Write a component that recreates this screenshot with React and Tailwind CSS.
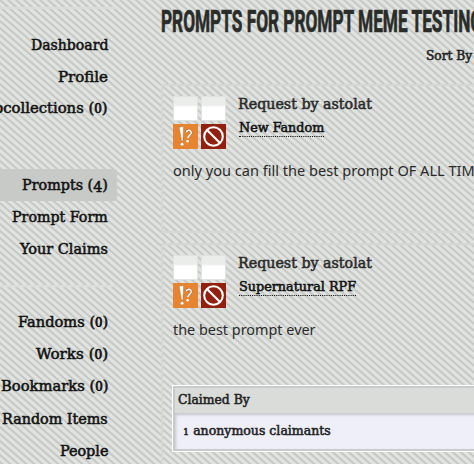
import React, { useLayoutEffect, useRef, useState } from "react";

// Single line of text condensed or widened to a set width.
function Fit({ w, right = false, className = "", children }) {
  const ref = useRef(null);
  const [k, setK] = useState(1);
  useLayoutEffect(() => {
    setK(w / ref.current.offsetWidth);
  }, [w]);
  return (
    <span
      ref={ref}
      className={`inline-block whitespace-nowrap ${right ? "origin-right" : "origin-left"} ${className}`}
      style={{ transform: `scaleX(${k})` }}
    >
      {children}
    </span>
  );
}

const slab = "font-['DejaVu_Serif_Condensed','DejaVu_Serif',serif] [-webkit-text-stroke:0.5px_currentColor]";

function Texture() {
  return (
    <svg className="absolute inset-0 -z-10 h-full w-full" aria-hidden="true">
      <defs>
        <pattern id="stripes" width="8" height="7" patternUnits="userSpaceOnUse">
          <rect width="8" height="7" fill="#e0e3df" />
          <path d="M-8 -7L16 14M-8 0L8 14M0 -7L16 7" stroke="#c5c8c4" strokeWidth="2" />
        </pattern>
      </defs>
      <rect width="100%" height="100%" fill="url(#stripes)" />
    </svg>
  );
}

function NavItem({ label, w, count, active }) {
  return (
    <li className={`flex h-8 items-center justify-end pb-px pr-[9px] ${active ? "rounded-r-[3px] bg-[#c8cac7]" : ""}`}>
      <Fit w={w} right className={`${slab} text-[15px] leading-[30px] text-[#111]`}>
        {label}
        {count !== undefined && (
          <> (<span className={count === "0" ? "text-[12px] [-webkit-text-stroke:0.7px_currentColor]" : "relative top-[2px]"}>{count}</span>)</>
        )}
      </Fit>
    </li>
  );
}

function Icons() {
  return (
    <div className="grid w-[53px] shrink-0 grid-cols-2 gap-x-[3px] gap-y-[3px]">
      <span className="h-[25px] border border-[#e0e3df] bg-linear-to-b from-[#ebedeb] from-35% to-white to-45%" />
      <span className="h-[25px] border border-[#e0e3df] bg-linear-to-b from-[#ebedeb] from-35% to-white to-45%" />
      <svg className="h-[25px] w-[25px]" viewBox="0 0 25 25">
        <rect width="25" height="25" fill="#e7842f" />
        <g fill="#fff" stroke="#8b6746" strokeWidth=".4">
          <path d="M6.2 3.2L10.6 2.6L9.9 17H8.5Z" />
          <circle cx="9.1" cy="20.3" r="1.8" />
        </g>
        <path d="M13.2 8.4C14 5 18.8 5.8 18.2 9.2C17.7 11.6 14.8 11.2 14.8 14.3" fill="none" stroke="#8b6746" strokeWidth="2.2" />
        <path d="M13.2 8.4C14 5 18.8 5.8 18.2 9.2C17.7 11.6 14.8 11.2 14.8 14.3" fill="none" stroke="#fff" strokeWidth="1.5" />
        <circle cx="14.6" cy="17.2" r="1.3" fill="#fff" />
      </svg>
      <svg className="h-[25px] w-[25px]" viewBox="0 0 25 25">
        <rect width="25" height="25" fill="#92200f" />
        <g fill="none" stroke="#fff" strokeWidth="2.1">
          <circle cx="12.5" cy="12.5" r="9.3" />
          <path d="M6 6L19 19" />
        </g>
      </svg>
    </div>
  );
}

function Prompt({ fandom, fandomW, text, textW, height, children }) {
  return (
    <article className={`border-2 border-[#d4d7d3] pl-[10px] pt-[10px] ${height}`}>
      <div className="flex">
        <Icons />
        <div className="-mt-px ml-3">
          <h4 className="h-[25px] leading-[16px]">
            <Fit w={134} className={`${slab} text-[15px] leading-[16px] text-[#2a2a2a]`}>Request by astolat</Fit>
          </h4>
          <div className="ml-px flex h-[18px] items-start">
            <Fit w={fandomW} className={`${slab} border-b border-dotted border-[#111] text-[13px] leading-[16px] text-[#111]`}>{fandom}</Fit>
          </div>
        </div>
      </div>
      <p className="mt-[11px] h-5 leading-5">
        <Fit w={textW} className="font-['Noto_Sans',sans-serif] text-[14px] leading-5 text-[#2a2a2a]">{text}</Fit>
      </p>
      {children}
    </article>
  );
}

export default function App() {
  return (
    <div className="relative isolate flex h-[464px] w-[474px] overflow-hidden">
      <Texture />
      <nav className="w-[117px] shrink-0">
        <div className="h-[7px]" />
        <ul className="h-[148px] border-t-2 border-[#dbdeda] pt-[20px]">
          <NavItem label="Dashboard" w={77} />
          <NavItem label="Profile" w={50} />
          <NavItem label="Subcollections" count="0" w={134} />
        </ul>
        <ul className="h-[130px] pt-[14px]">
          <NavItem label="Prompts" count="4" w={86} active />
          <NavItem label="Prompt Form" w={96} />
          <NavItem label="Your Claims" w={88} />
        </ul>
        <ul className="border-t-2 border-[#dbdeda] pt-[20px]">
          <NavItem label="Fandoms" count="0" w={90} />
          <NavItem label="Works" count="0" w={72} />
          <NavItem label="Bookmarks" count="0" w={107} />
          <NavItem label="Random Items" w={106} />
          <NavItem label="People" w={48} />
        </ul>
      </nav>
      <main className="ml-[44px] w-[340px] shrink-0">
        <h2 className="h-[43px] pt-[5px] leading-8">
          <Fit w={321} className="font-['Roboto',sans-serif] text-[32px] leading-8 font-bold text-[#292c29] [-webkit-text-stroke:0.7px_currentColor]">PROMPTS FOR PROMPT MEME TESTING</Fit>
        </h2>
        <div className="flex h-[41px] pl-[265px]">
          <Fit w={46} className={`${slab} h-6 text-[13px] leading-[26px] text-[#222]`}>Sort By</Fit>
        </div>
        <Prompt fandom="New Fandom" fandomW={85} text="only you can fill the best prompt OF ALL TIME" textW={310} height="h-[149px]" />
        <div className="h-[10px]" />
        <Prompt fandom="Supernatural RPF" fandomW={117} text="the best prompt ever" textW={143} height="h-[240px]">
          <section className="-ml-px mt-[46px] h-[67px] w-[340px] border border-white bg-[#dadcd9]">
            <div className="h-full border-2 border-[#c8c9ca]">
              <h5 className="h-[25px] pl-[3px] leading-[20px]">
                <Fit w={72} className={`${slab} text-[13px] leading-[21px] text-[#222]`}>Claimed By</Fit>
              </h5>
              <div className="h-[36px] bg-[#efeffa] pl-[8px] shadow-[inset_1px_2px_3px_#c6c6cc]">
                <Fit w={148} className={`${slab} text-[13px] leading-[35px] text-[#222]`}>
                  <span className="text-[10px]">1</span> anonymous claimants
                </Fit>
              </div>
            </div>
          </section>
        </Prompt>
      </main>
    </div>
  );
}
